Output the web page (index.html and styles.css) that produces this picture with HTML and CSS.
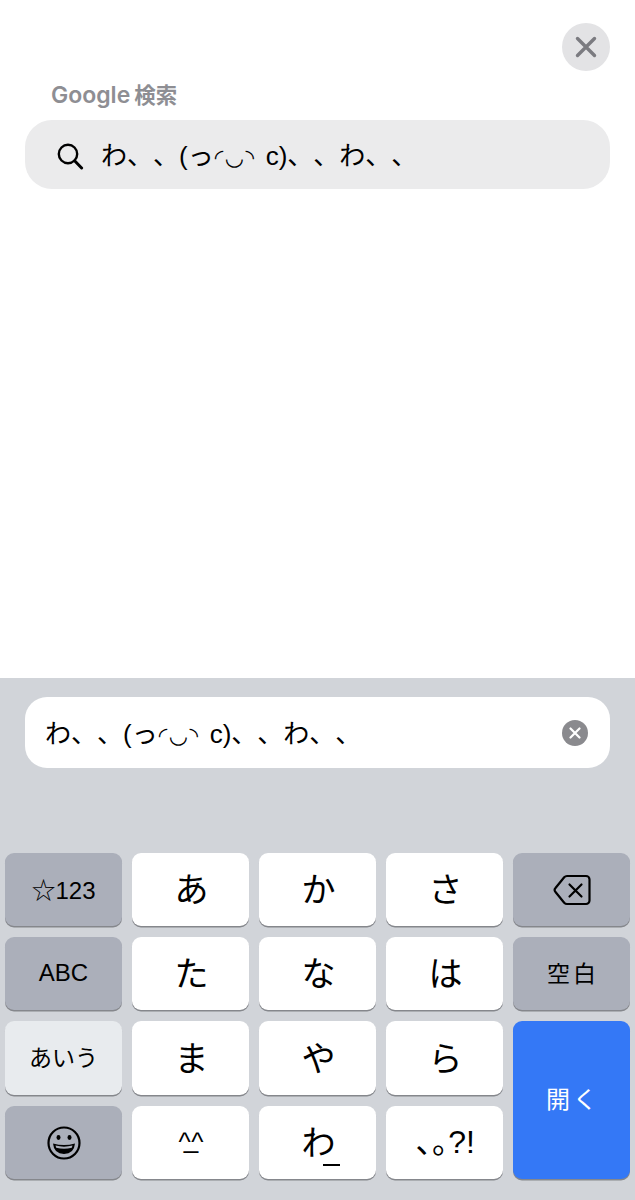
FILE: index.html
```html
<!DOCTYPE html>
<html lang="ja">
<head>
    <meta charset="UTF-8">
    <meta name="viewport" content="width=device-width, initial-scale=1.0">
    <title>Google 検索</title>
    <link rel="stylesheet" href="styles.css">
</head>
<body>

<div class="page">
    <div class="searchPanel">
        <div class="closeRow">
            <div class="closeBtn">
                <svg width="22" height="22" viewBox="0 0 22 22"><path d="M2.5 2.5 L19.5 19.5 M19.5 2.5 L2.5 19.5" stroke="#7b7b80" stroke-width="3.4" stroke-linecap="round" fill="none"/></svg>
            </div>
        </div>
        <div class="searchLabel">Google<span class="labelJa">検索</span></div>
        <div class="searchBar">
            <svg class="searchIcon" width="28" height="28" viewBox="0 0 28 28"><circle cx="12" cy="12" r="9.2" stroke="#000" stroke-width="2.4" fill="none"/><path d="M18.6 18.8 L25.6 26" stroke="#000" stroke-width="3" stroke-linecap="round"/></svg>
            <div class="kaomoji">わ、、(っ<span class="face">◜◡◝</span> c)、、わ、、</div>
        </div>
    </div>

    <div class="keyboardArea">
        <div class="inputBar">
            <div class="kaomoji">わ、、(っ<span class="face">◜◡◝</span> c)、、わ、、</div>
            <div class="clearBtn">
                <svg width="12" height="12" viewBox="0 0 12 12"><path d="M1.5 1.5 L10.5 10.5 M10.5 1.5 L1.5 10.5" stroke="#fff" stroke-width="2.2" stroke-linecap="round"/></svg>
            </div>
        </div>

        <div class="keys">
            <div class="key dark small">☆123</div>
            <div class="key kana">あ</div>
            <div class="key kana">か</div>
            <div class="key kana">さ</div>
            <div class="key dark">
                <svg width="38" height="32" viewBox="0 0 38 32"><path d="M14 2 H33 a3.5 3.5 0 0 1 3.500 3.500 V26.500 a3.500 3.500 0 0 1 -3.500 3.500 H14 a4 4 0 0 1 -2.800 -1.200 L2.500 18 a3 3 0 0 1 0 -4 L11.200 3.200 a4 4 0 0 1 2.800 -1.200 Z" stroke="#000" stroke-width="2.200" fill="none" stroke-linejoin="round"/><path d="M16.500 10.500 L28.500 22.500 M28.500 10.500 L16.500 22.500" stroke="#000" stroke-width="2.200" stroke-linecap="round"/></svg>
            </div>

            <div class="key dark small">ABC</div>
            <div class="key kana">た</div>
            <div class="key kana">な</div>
            <div class="key kana">は</div>
            <div class="key dark smallJa spaced">空白</div>

            <div class="key light smallJa">あいう</div>
            <div class="key kana">ま</div>
            <div class="key kana">や</div>
            <div class="key kana">ら</div>
            <div class="key go">開く</div>

            <div class="key dark">
                <svg width="36" height="36" viewBox="0 0 36 36"><circle cx="18" cy="18" r="15.500" stroke="#000" stroke-width="2.200" fill="none"/><ellipse cx="12.500" cy="12.500" rx="2" ry="2.400"/><ellipse cx="23.500" cy="12.500" rx="2" ry="2.400"/><path d="M7 18.500 Q18 21.500 29 18.500 Q28 29 18 29 Q8 29 7 18.500 Z"/><path d="M9.500 20.500 Q18 22.800 26.500 20.500 L25.800 22.800 Q18 24.600 10.200 22.800 Z" fill="#abafba"/></svg>
            </div>
            <div class="key kana kaoKey"><span>^<span class="kaoMouth">_</span>^</span></div>
            <div class="key kana waKey">わ<span class="waMark"></span></div>
            <div class="key kana punct">､｡?!</div>
        </div>
    </div>
</div>

</body>
</html>
```

FILE: styles.css
```css
/* Basic styling for the page */
body {
    font-family: "Liberation Sans", "Noto Sans CJK JP", "DejaVu Sans", sans-serif;
    background: #fff;
    color: #000;
    margin: 0;
    padding: 0;
    text-spacing-trim: space-all;
}

.page {
    display: flex;
    flex-direction: column;
    height: 1200px;
    overflow: hidden;
}

.searchPanel {
    height: 678px;
    padding: 23px 25px 0;
    box-sizing: border-box;
}

.closeRow {
    display: flex;
    justify-content: flex-end;
}

.closeBtn {
    width: 48px;
    height: 48px;
    border-radius: 50%;
    background: #e3e3e5;
    display: flex;
    align-items: center;
    justify-content: center;
}

.searchLabel {
    margin: 11px 0 0 26px;
    height: 27px;
    line-height: 27px;
    font-family: Inter, "Noto Sans CJK JP", sans-serif;
    font-size: 23px;
    font-weight: 600;
    color: #8e8e93;
}

.labelJa {
    margin-left: 4px;
    font-size: 21.5px;
    font-weight: 600;
}

.searchBar {
    margin-top: 11px;
    height: 69px;
    border-radius: 27px;
    background: #ebebec;
    display: flex;
    align-items: center;
    padding-left: 31px;
}

.searchIcon {
    margin-right: 17px;
    margin-top: 2px;
}

.kaomoji {
    font-size: 26px;
    line-height: 32px;
    margin-top: 4px;
    white-space: nowrap;
}

.face {
    font-size: 22px;
    letter-spacing: 1.500px;
    margin-left: 1px;
    margin-right: 3px;
}

.keyboardArea {
    flex: 1;
    background: #d1d4d9;
    padding-top: 19px;
}

.inputBar {
    margin: 0 25px;
    height: 71px;
    border-radius: 22px;
    background: #fff;
    display: flex;
    align-items: center;
    justify-content: space-between;
    padding: 0 22px 0 20px;
}

.clearBtn {
    width: 26px;
    height: 26px;
    border-radius: 50%;
    background: #8a8a8e;
    display: flex;
    align-items: center;
    justify-content: center;
}

.keys {
    margin-top: 85px;
    padding: 0 5px;
    display: grid;
    grid-template-columns: repeat(5, 117px);
    grid-template-rows: 73px 73px 74px 73px;
    column-gap: 10px;
    row-gap: 11px;
}

.key {
    border-radius: 9px;
    display: flex;
    align-items: center;
    justify-content: center;
    box-shadow: 0 1.5px 0 #85878c;
}

.kana {
    background: #fff;
    font-size: 34px;
    padding: 0 0 4px 2px;
}

.dark {
    background: #abafba;
}

.small {
    font-size: 24px;
    padding-bottom: 2px;
}

.spaced {
    letter-spacing: 3px;
    padding: 0 0 3px 3px;
}

.light {
    background: #e8ebee;
}

.smallJa {
    font-size: 23px;
}

.light.smallJa {
    padding-bottom: 4px;
}

.go {
    background: #3478f6;
    color: #fff;
    font-size: 24px;
    letter-spacing: 3px;
    padding: 0 0 5px 3px;
    grid-column: 5;
    grid-row: 3 / span 2;
}

.kaoKey {
    font-size: 26px;
    letter-spacing: -7px;
    padding-right: 8px;
}

.kaoMouth {
    vertical-align: 3px;
}

.waKey {
    padding-left: 6px;
}

.waMark {
    width: 17px;
    height: 2px;
    background: #000;
    margin-left: -13px;
    align-self: flex-end;
    margin-bottom: 9px;
}

.punct {
    font-size: 32px;
    padding-bottom: 8px;
}
```
